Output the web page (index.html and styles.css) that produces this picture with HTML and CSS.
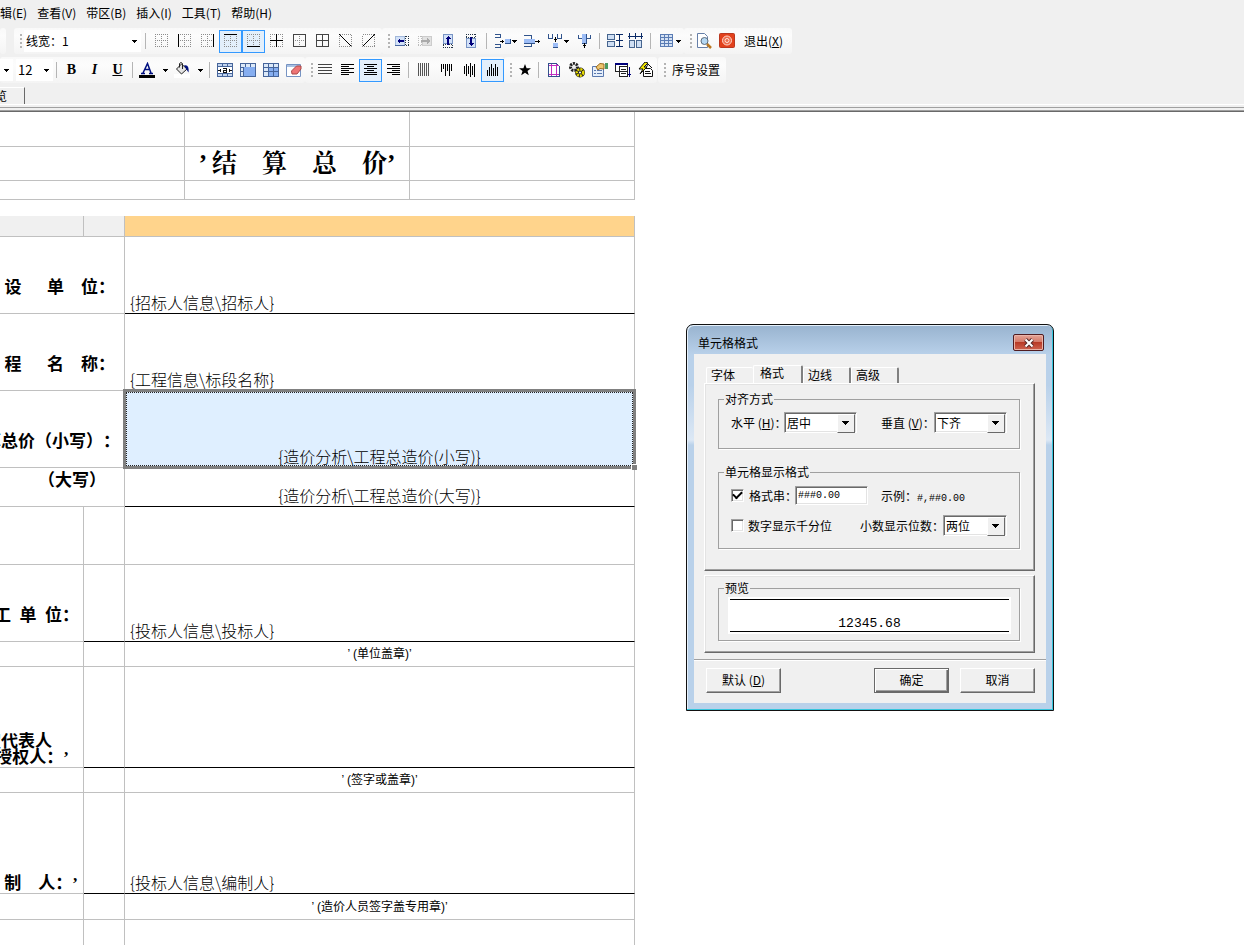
FILE: index.html
```html
<!DOCTYPE html>
<html lang="zh-CN">
<head>
<meta charset="utf-8">
<title>单元格格式</title>
<link rel="stylesheet" href="styles.css">
</head>
<body>
<svg class="sprite" aria-hidden="true">
  <symbol id="dots" viewBox="0 0 16 16"><path d="M1 1.5h14M1 7.5h14M1 13.5h14M1.5 1v14M7.5 1v14M13.5 1v14" stroke="#8c8c8c" stroke-dasharray="1 1"/></symbol>
  <symbol id="caret" viewBox="0 0 5 3"><path d="M0 0h5v1h-1v1h-1v1h-1v-1h-1v-1h-1z" fill="#000"/></symbol>
  <symbol id="cells" viewBox="0 0 16 16"><path d="M0 1h16v14H0z" fill="#46659b"/><path d="M1 2h4v3H1zM6 2h4v3H6zM11 2h4v3h-4zM1 6h4v3H1zM1 10h4v4H1z" fill="#dce9f8"/><path d="M6 6h4v3H6zM11 6h4v3h-4zM6 10h4v4H6zM11 10h4v4h-4z" fill="#86aef0"/></symbol>
</svg>
<div class="app">
  <nav class="menubar">
    <button>编辑(E)</button><button>查看(V)</button><button>带区(B)</button><button>插入(I)</button><button>工具(T)</button><button>帮助(H)</button>
  </nav>

  <div class="toolbar">
    <div class="group stub"></div>
    <div class="group first">
      <i class="grip"></i>
      <span class="combo wide"><input aria-label="线宽" value="线宽：1"><svg class="caret"><use href="#caret"/></svg></span>
      <i class="sep"></i>
      <button class="tool" aria-label="无边框"><svg viewBox="0 0 16 16"><use href="#dots"/></svg></button>
      <button class="tool" aria-label="左边框"><svg viewBox="0 0 16 16"><use href="#dots"/><path d="M1.5 1v13" stroke="#000"/></svg></button>
      <button class="tool" aria-label="右边框"><svg viewBox="0 0 16 16"><use href="#dots"/><path d="M13.5 1v13" stroke="#000"/></svg></button>
      <button class="tool on" aria-label="上边框"><svg viewBox="0 0 16 16"><use href="#dots"/><path d="M1 1.5h13" stroke="#000"/></svg></button>
      <button class="tool on" aria-label="下边框"><svg viewBox="0 0 16 16"><use href="#dots"/><path d="M1 13.5h13" stroke="#000"/></svg></button>
      <button class="tool" aria-label="内边框"><svg viewBox="0 0 16 16"><use href="#dots"/><path d="M1 7.5h13M7.5 1v13" stroke="#000"/></svg></button>
      <button class="tool" aria-label="外边框"><svg viewBox="0 0 16 16"><use href="#dots"/><path d="M1.5 1.5h12v12h-12z" stroke="#444"/></svg></button>
      <button class="tool" aria-label="所有边框"><svg viewBox="0 0 16 16"><path d="M1.5 1.5h12v12h-12zM1 7.5h13M7.5 1v13" stroke="#444"/></svg></button>
      <button class="tool" aria-label="斜线"><svg viewBox="0 0 16 16"><path d="M1.5 1.5h12v12h-12z" stroke="#8c8c8c" stroke-dasharray="1 1"/><path d="M1.5 1.5l12 12" stroke="#000"/></svg></button>
      <button class="tool" aria-label="反斜线"><svg viewBox="0 0 16 16"><path d="M1.5 1.5h12v12h-12z" stroke="#8c8c8c" stroke-dasharray="1 1"/><path d="M13.5 1.5l-12 12" stroke="#000"/></svg></button>
    </div>
    <div class="group">
      <i class="grip"></i>
      <button class="tool" aria-label="左插入"><svg viewBox="0 0 16 16"><path d="M10 3.5h5M10 12.5h5M14.5 3v10M11.5 3v10" stroke="#234" stroke-dasharray="1 1"/><path d="M1.500 3.500h9v9h-9z" fill="#d3e2f8" stroke="#a3b9dc"/><path d="M1 12.500h10" stroke="#4a68a0"/><path d="M3 8l3-3v2h4v2H6v2z" fill="#00007b"/></svg></button>
      <button class="tool" aria-label="右插入"><svg viewBox="0 0 16 16"><path d="M1 3.500h5M1 12.500h5M1.500 3v10M4.500 3v10" stroke="#bbb" stroke-dasharray="1 1"/><path d="M5.500 3.500h9v9h-9z" fill="#e2e2e2" stroke="#ccc"/><path d="M13 8l-3-3v2H4v2h6v2z" fill="#aaa"/></svg></button>
      <button class="tool" aria-label="上插入"><svg viewBox="0 0 16 16"><path d="M3.500 10v5M12.500 10v5M3 11.500h10M3 14.500h10" stroke="#234" stroke-dasharray="1 1"/><path d="M3.500 1.500h9v9h-9z" fill="#d3e2f8" stroke="#7894c4"/><path d="M8 3l3 3H9v6H7V6H5z" fill="#00007b"/></svg></button>
      <button class="tool" aria-label="下插入"><svg viewBox="0 0 16 16"><path d="M3.500 1v5M12.500 1v5M3 1.500h10M3 4.500h10" stroke="#234" stroke-dasharray="1 1"/><path d="M3.500 5.500h9v9h-9z" fill="#d3e2f8" stroke="#7894c4"/><path d="M8 13l3-3H9V4H7v6H5z" fill="#00007b"/></svg></button>
      <i class="sep"></i>
      <button class="tool drop" aria-label="插入行"><svg viewBox="0 0 16 16"><path d="M0 1.5h5v3H0M0 11.500h5v3H0" stroke="#31548c"/><path d="M5 8.500h4M7.500 7v3" stroke="#000"/><path d="M10 6h6v5h-6z" fill="#9dbdf6"/><path d="M10 10.500h6M15.500 6v5" stroke="#31548c"/></svg><svg class="caret"><use href="#caret"/></svg></button>
      <button class="tool" aria-label="删除行"><svg viewBox="0 0 16 16"><path d="M0 2.500h7v3M0 13.500h7v-3" stroke="#31548c"/><path d="M0 6h11v4H0z" fill="#9dbdf6"/><path d="M0 10.500h11" stroke="#31548c"/><path d="M11 8.500h5M14.500 7v3" stroke="#000"/></svg></button>
      <button class="tool drop" aria-label="插入列"><svg viewBox="0 0 16 16"><path d="M1.500 1v4h4V1M10.500 1v4h4V1" stroke="#31548c"/><path d="M8 4v5M7 6.500h3" stroke="#000"/><path d="M6 10h5v5H6z" fill="#9dbdf6"/><path d="M6 14.500h5" stroke="#31548c"/></svg><svg class="caret"><use href="#caret"/></svg></button>
      <button class="tool" aria-label="删除列"><svg viewBox="0 0 16 16"><path d="M2 1.500v4h4M14 1.500v4h-4" stroke="#31548c"/><path d="M6 1h4v9H6z" fill="#9dbdf6"/><path d="M10.500 1v9H6" stroke="#31548c"/><path d="M8.500 10v5M7 12.500h3" stroke="#000"/></svg></button>
      <i class="sep"></i>
      <button class="tool slim" aria-label="行高"><svg viewBox="0 0 16 16"><path d="M.5 1.500h7v5h-7zM.5 8.500h7v5h-7z" fill="#cfdff4" stroke="#46658f"/><path d="M9 1.500h7M9 7.500h7M9 13.500h7M12.500 1v13" stroke="#0a2a66"/></svg></button>
      <button class="tool slim" aria-label="列宽"><svg viewBox="0 0 16 16"><path d="M1.500 7.500h5v7h-5zM8.500 7.500h5v7h-5z" fill="#cfdff4" stroke="#46658f"/><path d="M1.500 0v6M7.500 0v6M13.500 0v6M0 3h15" stroke="#0a2a66"/></svg></button>
      <i class="sep"></i>
      <button class="tool drop" aria-label="表格"><svg viewBox="0 0 16 16"><path d="M1 1h13v13H1z" fill="#d5e2f4"/><path d="M1.500 1.500h12v12h-12zM1 4.500h13M1 7.500h13M1 10.500h13M5.500 1v13M9.500 1v13" stroke="#5a7cb4"/></svg><svg class="caret"><use href="#caret"/></svg></button>
    </div>
    <div class="group">
      <i class="grip"></i>
      <button class="tool" aria-label="打印预览"><svg class="smooth" viewBox="0 0 16 16"><path d="M1.500.5h7l3 3v11h-10z" fill="#fff" stroke="#667fa8"/><circle cx="8.500" cy="8" r="3.500" fill="#b5d8f3" stroke="#5c6b7c"/><path d="M11 11l4 4" stroke="#b87722" stroke-width="2.500"/></svg></button>
      <button class="tool" aria-label="退出图标"><svg class="smooth" viewBox="0 0 16 16"><rect x=".5" y=".5" width="15" height="14" rx="1" fill="#e2411c" stroke="#b93820"/><circle cx="8" cy="7.500" r="4.500" fill="#ed6b4b" stroke="#ffd9cc"/><circle cx="8" cy="7.500" r="2" stroke="#ffe6dc"/></svg></button>
      <button class="text">退出(<u>X</u>)</button>
    </div>
  </div>

  <div class="toolbar second">
    <div class="group fonts">
      <span class="combo tiny"><svg class="caret"><use href="#caret"/></svg></span>
      <span class="combo size"><input aria-label="字号" value="12"><svg class="caret"><use href="#caret"/></svg></span>
      <i class="sep"></i>
      <button class="tool glyph">B</button>
      <button class="tool glyph italic">I</button>
      <button class="tool glyph under">U</button>
      <i class="sep"></i>
      <button class="tool drop far" aria-label="文字颜色"><svg class="smooth" viewBox="0 0 16 16"><path d="M2 11.500h4M10 11.500h4M4 11L8.500 1.500 12 11M5.500 7.500h5" stroke="#001080" stroke-width="1.500"/><path d="M0 13h16v3H0z" fill="#000"/></svg><svg class="caret"><use href="#caret"/></svg></button>
      <button class="tool drop far" aria-label="填充颜色"><svg class="smooth" viewBox="0 0 16 16"><path d="M0 12h16v4H0z" fill="#fff"/><path d="M2.500 7l5-5 5.500 5-5.500 5z" fill="#e4e4e4" stroke="#222"/><path d="M5.500 5.500V1.500q1.500-2 3 0V7" stroke="#222"/><path d="M10 3.500c4-1 5 2 4.500 7l-2-3z" fill="#001080"/></svg><svg class="caret"><use href="#caret"/></svg></button>
      <i class="sep"></i>
      <button class="tool" aria-label="合并"><svg viewBox="0 0 16 16"><path d="M.5 1.500h15v13H.5zM0 4.500h16M0 11.500h16M5.500 1v3M10.500 1v3M5.500 12v3M10.500 12v3" fill="#c3d5ee" stroke="#46659b"/><path d="M1 5h14v6H1z" fill="#fff"/><path d="M1 8.500h3M12 8.500h3M3.500 7v3M12.500 7v3M6 6.500h3.500v4H6.500V8.500h3" stroke="#111"/></svg></button>
      <button class="tool" aria-label="取消合并"><svg viewBox="0 0 16 16"><path d="M0 1h16v14H0z" fill="#46659b"/><path d="M1 2h4v3H1zM6 2h4v3H6zM11 2h4v3h-4zM1 6h2v3H1zM1 10h2v4H1z" fill="#dce9f8"/><path d="M4 5h11v9H4z" fill="#86aef0"/></svg></button>
      <button class="tool" aria-label="单元格"><svg viewBox="0 0 16 16"><use href="#cells"/></svg></button>
      <button class="tool" aria-label="清除"><svg class="smooth" viewBox="0 0 16 16"><path d="M.5 2.500h14v12H.5z" fill="#fff" stroke="#7693c2"/><path d="M1 4h13" stroke="#a9c2e4" stroke-width="2"/><path d="M5.500 9l5-5h4.500v3L11 12H6z" fill="#ef7575" stroke="#a94848"/></svg></button>
    </div>
    <div class="group">
      <i class="grip"></i>
      <button class="tool" aria-label="两端对齐"><svg viewBox="0 0 16 16"><path d="M1 2.500h14M1 5.500h14M1 8.500h14M1 11.500h14" stroke="#444"/></svg></button>
      <button class="tool" aria-label="左对齐"><svg viewBox="0 0 16 16"><path d="M1 2.500h13M1 4.500h8M1 6.500h13M1 8.500h8M1 10.500h13M1 12.500h8" stroke="#000"/></svg></button>
      <button class="tool on" aria-label="居中"><svg viewBox="0 0 16 16"><path d="M1 2.500h13M4 4.500h7M1 6.500h13M4 8.500h7M1 10.500h13M1 12.500h13" stroke="#000"/></svg></button>
      <button class="tool" aria-label="右对齐"><svg viewBox="0 0 16 16"><path d="M1 2.500h13M6 4.500h8M1 6.500h13M6 8.500h8M1 10.500h13M6 12.500h8" stroke="#000"/></svg></button>
      <i class="sep"></i>
      <button class="tool" aria-label="垂直分散"><svg viewBox="0 0 16 16"><path d="M2.500 1v13M4.500 1v13M6.500 1v13M8.500 1v13M10.500 1v13M12.500 1v13" stroke="#555"/></svg></button>
      <button class="tool" aria-label="上对齐"><svg viewBox="0 0 16 16"><path d="M2.500 2v8M4.500 2v5M6.500 2v12M8.500 2v7M10.500 2v12M12.500 2v7" stroke="#000"/></svg></button>
      <button class="tool" aria-label="垂直居中"><svg viewBox="0 0 16 16"><path d="M2.500 4v8M4.500 2v12M6.500 4v8M8.500 1v14M10.500 4v9M12.500 2v13" stroke="#000"/></svg></button>
      <button class="tool on" aria-label="下对齐"><svg viewBox="0 0 16 16"><path d="M2.500 8v6M4.500 5v9M6.500 2v12M8.500 6v8M10.500 2v12M12.500 5v9" stroke="#000"/></svg></button>
    </div>
    <div class="group">
      <i class="grip"></i>
      <button class="tool" aria-label="收藏"><svg class="smooth" viewBox="0 0 16 16"><path d="M9 2l1.600 4.200H15l-3.500 2.700 1.300 4.400L9 10.700l-3.800 2.600 1.300-4.400L3 6.200h4.400z" fill="#000"/></svg></button>
      <i class="sep"></i>
      <button class="tool" aria-label="页面设置"><svg viewBox="0 0 16 16"><path d="M2.500 1.500h8l3 3v10h-11z" fill="#fff" stroke="#34508c"/><path d="M5.500 2v12M10.500 2v12M3 3.500h10M3 12.500h10" stroke="#c02fc0"/></svg></button>
      <button class="tool" aria-label="选项"><svg class="smooth" viewBox="0 0 16 16"><circle cx="5" cy="5" r="3.500" fill="#eee" stroke="#222" stroke-width="3" stroke-dasharray="2 1"/><circle cx="11" cy="10.500" r="3" fill="#fff" stroke="#222" stroke-width="4"/><circle cx="11" cy="10.500" r="3.200" stroke="#e6d900" stroke-width="2.500" stroke-dasharray="2 1"/></svg></button>
      <button class="tool" aria-label="属性"><svg class="smooth" viewBox="0 0 16 16"><path d="M.5 4.500h11v10H.5z" fill="#e6effb" stroke="#5a78ae"/><path d="M2 8.500h2M5 8.500h5M2 11.500h2M5 11.500h5" stroke="#5a78ae"/><path d="M4 5l4-3.500 4 .5V7L8 6.500 6 8z" fill="#efc56d" stroke="#9a6b20"/><path d="M13 1h3v6h-3z" fill="#4b9b62"/></svg></button>
      <button class="tool" aria-label="列表"><svg viewBox="0 0 16 16"><path d="M.5 1.500h12v8H.5zM4.500 4.500h8v10h-8z" fill="#fff" stroke="#222"/><path d="M0 2h13" stroke="#00007b" stroke-width="2"/><path d="M6 7.500h5M6 9.500h5M6 11.500h5" stroke="#222"/><path d="M14.500 5v10M13 12.500h3" stroke="#00007b"/></svg></button>
      <button class="tool" aria-label="批注"><svg class="smooth" viewBox="0 0 16 16"><path d="M5.500 6.500h7l2 2v6h-9z" fill="#fff" stroke="#111"/><path d="M7 9.500h5M7 11.500h6M8 6l2-4 4 4" stroke="#111"/><path d="M7 0L1 7h4l-3 5 7-7H6l4-4z" fill="#f1e600" stroke="#111"/></svg></button>
    </div>
    <div class="group last">
      <i class="grip"></i>
      <button class="text">序号设置</button>
    </div>
  </div>

  <div class="tabstrip"><button class="sheet-tab">预览</button></div>

  <main class="sheet">
    <table class="grid title-grid">
      <colgroup><col class="t1"><col class="t2"><col class="t3"></colgroup>
      <tr class="h35"><td></td><td></td><td></td></tr>
      <tr class="h34"><td></td><td class="title">’&thinsp;结&ensp;&ensp;算&ensp;&ensp;总&ensp;&ensp;价’</td><td></td></tr>
      <tr class="h19"><td></td><td></td><td></td></tr>
    </table>
    <table class="grid body-grid">
      <colgroup><col class="b1"><col class="b2"><col class="b3"></colgroup>
      <tr class="head"><td></td><td></td><td class="picked"></td></tr>
      <tr class="h77"><td colspan="2" class="label up"><div>建&ensp;&ensp;&ensp;设&ensp;&ensp;&ensp;单&ensp;&ensp;位：</div></td><td class="field line">{招标人信息\招标人}</td></tr>
      <tr class="h77"><td colspan="2" class="label up"><div>工&ensp;&ensp;&ensp;程&ensp;&ensp;&ensp;名&ensp;&ensp;称：</div></td><td class="field">{工程信息\标段名称}</td></tr>
      <tr class="h77"><td colspan="2" class="label up edge"><div>结算总价（小写）：</div></td><td class="field mid selected">{造价分析\工程总造价(小写)}</td></tr>
      <tr class="h39"><td colspan="2" class="label up inner"><div>（大写）</div></td><td class="field mid line">{造价分析\工程总造价(大写)}</td></tr>
      <tr class="h58"><td></td><td></td><td></td></tr>
      <tr class="h77"><td class="label up"><div>施&ensp;工&ensp;单&ensp;位：</div></td><td class="line"></td><td class="field line">{投标人信息\投标人}</td></tr>
      <tr class="h25"><td></td><td></td><td class="note">’ (单位盖章)’</td></tr>
      <tr class="h101"><td class="label down"><div><span>法定代表人&emsp;<br>或其授权人：’</span></div></td><td class="line"></td><td class="line"></td></tr>
      <tr class="h25"><td></td><td></td><td class="note">’ (签字或盖章)’</td></tr>
      <tr class="h101"><td class="label down close-in"><div>编&ensp;&ensp;制&ensp;&ensp;人：’</div></td><td class="line"></td><td class="field line">{投标人信息\编制人}</td></tr>
      <tr class="h26"><td></td><td></td><td class="note">’ (造价人员签字盖专用章)’</td></tr>
      <tr class="h58"><td></td><td></td><td></td></tr>
    </table>
  </main>

  <section class="dialog" role="dialog" aria-labelledby="dlg-title">
    <header class="caption"><span id="dlg-title">单元格格式</span>
      <button class="close" aria-label="关闭"><svg viewBox="0 0 12 10"><path d="M2.500 1.500l7 7M9.500 1.500l-7 7" stroke="#5a2a2a" stroke-width="4"/><path d="M2.500 1.500l7 7M9.500 1.500l-7 7" stroke="#fff" stroke-width="2"/></svg></button>
    </header>
    <div class="client">
      <div class="tabs" role="tablist">
        <button role="tab">字体</button><button role="tab" aria-selected="true" class="current">格式</button><button role="tab">边线</button><button role="tab">高级</button>
      </div>
      <div class="panel main">
        <fieldset class="align">
          <legend>对齐方式</legend>
          <div class="row">
            <label for="hz">水平 (<u>H</u>)：</label>
            <span class="pick"><select id="hz"><option>居中</option></select></span>
            <label for="vt" class="second-label">垂直 (<u>V</u>)：</label>
            <span class="pick"><select id="vt"><option>下齐</option></select></span>
          </div>
        </fieldset>
        <fieldset class="format">
          <legend>单元格显示格式</legend>
          <div class="row">
            <input type="checkbox" id="fs" checked><label for="fs" class="fmt-label">格式串：</label>
            <input type="text" class="mono box" aria-label="格式串" value="###0.00">
            <span class="sample">示例：<span class="mono">#,##0.00</span></span>
          </div>
          <div class="row">
            <input type="checkbox" id="th"><label for="th" class="th-label">数字显示千分位</label>
            <label for="dc" class="dc-label">小数显示位数：</label>
            <span class="pick small"><select id="dc"><option>两位</option></select></span>
          </div>
        </fieldset>
      </div>
      <div class="panel preview">
        <fieldset>
          <legend>预览</legend>
          <div class="paper"><output>12345.68</output></div>
        </fieldset>
      </div>
      <footer class="actions">
        <button>默认 (<u>D</u>)</button>
        <button class="primary">确定</button>
        <button>取消</button>
      </footer>
    </div>
  </section>
</div>
</body>
</html>
```

FILE: styles.css
```css
* { box-sizing: border-box; }
body {
  margin: 0;
  background: #f0f0f0;
  color: #000;
  font: 12px/16px "Noto Sans CJK SC", sans-serif;
  text-spacing-trim: space-all;
}
button, input, select { font: inherit; color: inherit; margin: 0; padding: 0; border: 0; background: none; border-radius: 0; }
svg { display: block; fill: none; shape-rendering: crispEdges; }
svg.smooth { shape-rendering: auto; }
.sprite { position: absolute; width: 0; height: 0; }
.app { display: flex; flex-direction: column; height: 100vh; overflow: hidden; position: relative; }

/* menu and toolbars */
.menubar { display: flex; gap: 10px; height: 28px; padding-bottom: 2px; align-items: center; margin-left: -12px; flex: none; }
.menubar button { white-space: nowrap; }
.toolbar { display: flex; height: 26px; flex: none; }
.toolbar.second { margin-top: 3px; }
.group { display: flex; align-items: center; padding: 0 2px 0 6px; background: linear-gradient(#f9f9f9, #fcfcfc 30%, #f4f4f4); border-radius: 3px; }
.group + .group { padding-right: 0; }
.group.stub { width: 6px; padding: 0; margin-right: 8px; }
.group.first { padding-right: 2px; }
.group.fonts { padding: 0; }
.group.last { margin-left: 1px; }
.grip { width: 2px; height: 15px; flex: none; background: repeating-linear-gradient(#b4b4b4 0 2px, transparent 2px 4px); }
.sep { width: 9px; height: 16px; flex: none; background: linear-gradient(#b5b5b5, #b5b5b5) center / 1px 100% no-repeat; }
.second .sep { width: 7px; }
.combo { display: flex; align-items: center; height: 22px; background: #fff; }
.combo input { flex: 1; min-width: 0; padding-left: 2px; font-size: 12px; }
.combo .caret { margin-right: 4px; }
.combo.wide { width: 117px; margin-left: 2px; }
.combo.tiny { width: 13px; margin-right: 3px; justify-content: flex-end; }
.combo.size { width: 37px; }
.combo.size input { font-size: 13px; }
.caret { width: 5px; height: 3px; flex: none; }
.tool { width: 23px; height: 23px; display: flex; align-items: center; justify-content: center; flex: none; border: 1px solid transparent; }
.tool svg:first-child { width: 16px; height: 16px; flex: none; }
.tool.on { background: #e3effb; border-color: #3399ff; }
.tool.slim { width: 21px; }
.tool.drop { width: 29px; gap: 1px; }
.tool.far { width: 35px; gap: 8px; }
.glyph { font: bold 14px/16px "Liberation Serif", serif; }
.italic { font-style: italic; }
.under { text-decoration: underline; }
.text { padding: 0 6px; white-space: nowrap; height: 23px; }
.text:last-child { padding-right: 9px; }
.last .text { padding-right: 6px; }

.tabstrip { height: 29px; padding-top: 4px; flex: none; border-bottom: 1px solid #696969; background: linear-gradient(#fff, #fff) 0 21px / 100% 1px no-repeat, linear-gradient(#a0a0a0, #a0a0a0) 0 24px / 100% 1px no-repeat, linear-gradient(#a0a0a0, #a0a0a0) 0 27px / 100% 1px no-repeat; }
.sheet-tab { display: flex; justify-content: flex-end; align-items: center; width: 25px; height: 17px; padding-right: 17px; border-right: 1px solid #696969; border-top: 1px solid #fff; overflow: hidden; white-space: nowrap; }

/* report sheet */
.sheet { flex: 1; background: #fff; overflow: hidden; }
.grid { border-collapse: separate; border-spacing: 0; table-layout: fixed; width: 635px; }
.grid td { padding: 0; border-right: 1px solid #c0c0c0; border-bottom: 1px solid #c0c0c0; }
.title-grid { margin-bottom: 16px; }
.t1 { width: 185px; } .t2, .t3 { width: 225px; }
.b1 { width: 84px; } .b2 { width: 41px; } .b3 { width: 510px; }
.h19 { height: 19px; } .h25 { height: 25px; } .h26 { height: 26px; } .h34 { height: 34px; }
.h35 { height: 35px; } .h39 { height: 39px; } .h58 { height: 58px; } .h77 { height: 77px; } .h101 { height: 101px; }
.title { font: bold 25px/30px "Liberation Serif", "Noto Serif CJK SC", "Noto Sans CJK SC", serif; text-align: center; white-space: nowrap; }
.head { height: 21px; background: #f0f0f0; }
.head .picked { background: #ffd48c; }
.grid td.line { border-bottom-color: #000; }
.label { font: bold 17px/16px "Liberation Serif", "Noto Sans CJK SC", sans-serif; vertical-align: bottom; overflow: hidden; }
.label div { display: flex; justify-content: flex-end; text-align: right; white-space: nowrap; }
.up div { padding: 0 4px 17px 0; }
.up[colspan] div { padding-right: 9px; }
.up.edge div { padding-right: 4px; }
.up.inner div { padding-right: 18px; }
.down div { padding: 0 14px 1px 0; }
.down.close-in div { padding-right: 5px; }
.field { font-size: 16px; line-height: 18px; font-weight: 300; vertical-align: bottom; }
.grid td.field { padding: 0 0 2px 5px; }
.grid td.mid { padding-left: 0; text-align: center; }
.note { font-family: "Liberation Sans", "Noto Sans CJK SC", sans-serif; text-align: center; }
.selected { position: relative; background: #dfefff; }
.selected::before { content: ""; position: absolute; inset: -2px; border: 3px solid #808080; outline: 1px dotted #222; outline-offset: -4px; }
.selected::after { content: ""; position: absolute; right: -3px; bottom: -3px; width: 5px; height: 5px; background: #808080; border: 1px solid #fff; border-width: 1px 0 0 1px; }

/* floating dialog */
.dialog { position: absolute; left: 686px; top: 324px; width: 368px; border: 1px solid #111; border-radius: 7px 7px 0 0; padding: 0 7px 7px; background: linear-gradient(#98b3cf, #b9d1ea 30px, #b9d1ea 60px, #dce8f5 115px, #b9d1ea 120px); box-shadow: inset -1px -1px #35c5dc, inset 1px 1px #e6f1fb; }
.caption { display: flex; align-items: center; justify-content: space-between; height: 29px; padding: 6px 2px 0 4px; }
.close { width: 31px; height: 17px; display: flex; align-items: center; justify-content: center; border: 1px solid #501c20; border-radius: 2px; background: linear-gradient(#e5a497, #d37867 48%, #b83a26 50%, #cf6350); box-shadow: inset 0 0 0 1px #e9b4a9; }
.close svg { width: 12px; height: 10px; shape-rendering: auto; }
.client { background: #f0f0f0; padding: 11px 0 10px; }
.tabs { display: flex; align-items: flex-end; padding-left: 12px; height: 18px; }
.tabs button { width: 48px; height: 16px; padding: 0 0 2px 4px; text-align: left; border-top: 1px solid #fff; border-right: 2px solid #808080; border-left: 1px solid #fff; border-radius: 2px 2px 0 0; line-height: 14px; }
.tabs button:first-child { width: 47px; border-right: 0; }
.tabs .current { width: 50px; height: 18px; padding-left: 6px; padding-bottom: 3px; }
.panel { margin: 0 11px 0 10px; border: 1px solid; border-color: #fff #696969 #696969 #fff; box-shadow: inset -1px -1px #a0a0a0, inset 1px 1px #e3e3e3; padding: 8px 14px 0 13px; }
.main { height: 188px; }
.preview { height: 78px; margin-top: 4px; padding-top: 5px; }
fieldset { margin: 0; min-width: 0; border: 1px solid #a0a0a0; box-shadow: 1px 1px #fff; padding: 0; }
legend { margin-left: 5px; padding: 0 1px; line-height: 14px; }
.align { height: 57px; }
.format { height: 84px; margin-top: 16px; }
.row { display: flex; align-items: center; height: 21px; padding-left: 12px; white-space: nowrap; }
.align .row { margin-top: 6px; }
.format .row { margin-top: 6px; }
.format .row + .row { margin-top: 9px; }
.align label { width: 53px; }
.align label.second-label { margin-left: 24px; }
.pick { position: relative; width: 73px; height: 21px; background: #fff; border: 1px solid; border-color: #a0a0a0 #fff #fff #a0a0a0; box-shadow: inset 1px 1px #696969, inset -1px -1px #e3e3e3; }
.pick.small { width: 64px; }
.pick select { appearance: none; width: 100%; height: 19px; padding-left: 2px; }
.pick::after { content: ""; position: absolute; right: 1px; top: 1px; width: 16px; height: 17px; pointer-events: none; border: 1px solid; border-color: #fff #696969 #696969 #fff; background: linear-gradient(#000, #000) 4px 6px / 7px 1px no-repeat, linear-gradient(#000, #000) 5px 7px / 5px 1px no-repeat, linear-gradient(#000, #000) 6px 8px / 3px 1px no-repeat, linear-gradient(#000, #000) 7px 9px / 1px 1px no-repeat, #f0f0f0; }
input[type="checkbox"] { appearance: none; display: grid; place-items: center; width: 13px; height: 13px; flex: none; background: #fff; border: 1px solid; border-color: #a0a0a0 #fff #fff #a0a0a0; box-shadow: inset 1px 1px #696969, inset -1px -1px #e3e3e3; }
input[type="checkbox"]:checked::before { content: ""; width: 7px; height: 4px; border: solid #000; border-width: 0 0 2px 2px; transform: rotate(-45deg); margin-bottom: 3px; }
.fmt-label { width: 46px; margin-left: 5px; }
.mono { font-family: "Liberation Mono", monospace; font-size: 10px; }
.box { width: 73px; height: 19px; background: #fff; padding-left: 2px; border: 1px solid; border-color: #a0a0a0 #fff #fff #a0a0a0; box-shadow: inset 1px 1px #696969, inset -1px -1px #e3e3e3; }
.sample { margin-left: 13px; padding-top: 4px; }
.th-label { margin-left: 4px; width: 112px; }
.dc-label { width: 83px; }
.preview fieldset { height: 60px; }
.paper { margin: 2px 8px 0 9px; height: 37px; padding: 2px; background: #fff; }
.paper output { display: flex; align-items: flex-end; justify-content: center; height: 33px; border: solid #000; border-width: 1px 0; font: 13px/14px "Liberation Mono", monospace; }
.actions { display: flex; margin-top: 6px; padding: 8px 11px 0 12px; border-top: 1px solid #a0a0a0; box-shadow: inset 0 1px #fff; }
.actions button { width: 75px; height: 25px; padding-bottom: 2px; border: 1px solid; border-color: #fff #696969 #696969 #fff; box-shadow: inset -1px -1px #a0a0a0; }
.actions .primary { margin-left: auto; margin-right: 11px; border-color: #696969; box-shadow: inset 1px 1px #fff, inset -1px -1px #696969, inset -2px -2px #a0a0a0; }
```
